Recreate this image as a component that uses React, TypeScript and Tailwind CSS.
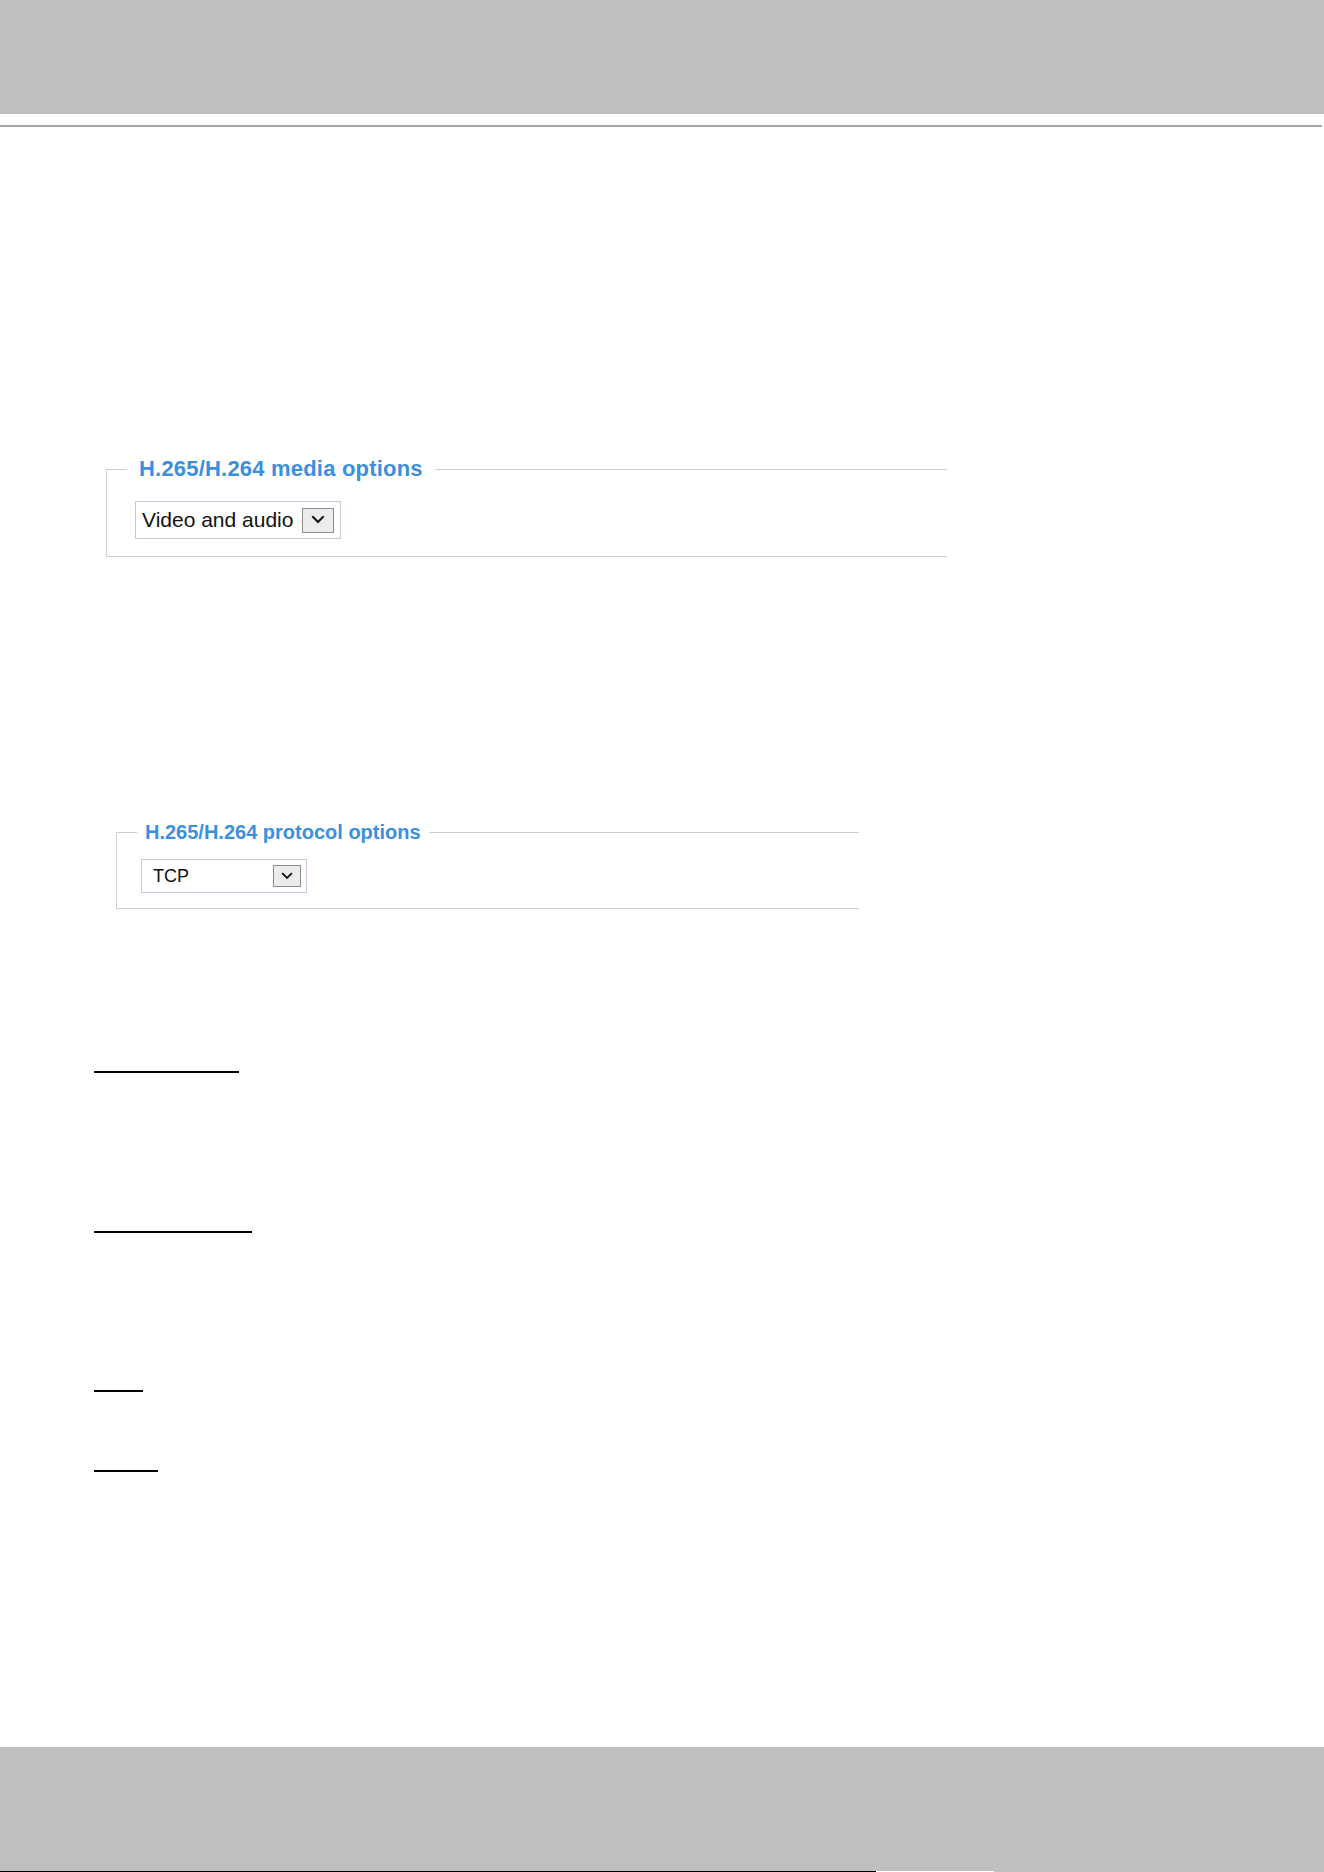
import React from 'react';

interface OptionBoxProps {
  legend: string;
  value: string;
  className?: string;
  legendClass: string;
  selectClass: string;
  textClass: string;
  buttonClass: string;
  chevron: number;
}

// little down-chevron used by the fake dropdown buttons
const Chevron: React.FC<{ size: number }> = ({ size }) => (
  <svg width={size} height={size * 0.7} viewBox="0 0 10 7" fill="none">
    <polyline points="1.5,1.5 5,5 8.5,1.5" stroke="#1a1a1a" strokeWidth="1.6" strokeLinecap="square" />
  </svg>
);

/**
 * Settings group drawn like an old-style fieldset:
 * - blue bold legend cut into the top rule
 * - open on the right side
 * - a single select with a boxed arrow button
 */
const OptionBox: React.FC<OptionBoxProps> = ({
  legend,
  value,
  className = '',
  legendClass,
  selectClass,
  textClass,
  buttonClass,
  chevron
}) => (
  <fieldset
    className={[
      'border-t border-l border-b border-[#d3cfc6] font-["Liberation_Sans",Arial,sans-serif]',
      className
    ].join(' ')}
  >
    <legend className={['font-bold text-[#3b8fdf]', legendClass].join(' ')}>{legend}</legend>
    <div
      className={[
        'flex items-center justify-between border border-[#c3ccdb] bg-white text-[#111]',
        selectClass
      ].join(' ')}
    >
      <span className={textClass}>{value}</span>
      <span
        className={[
          'flex items-center justify-center border border-[#8e8e8e] bg-[#ececec]',
          buttonClass
        ].join(' ')}
      >
        <Chevron size={chevron} />
      </span>
    </div>
  </fieldset>
);

export default function App() {
  return (
    <div className="w-[1324px] h-[1872px] bg-white flex flex-col">
      {/* page header band */}
      <div className="h-[114px] bg-[#bebfc1]" />
      <div className="mt-[11px] h-[2px] w-[1322px] bg-[#a6a6a6]" />

      <OptionBox
        legend="H.265/H.264 media options"
        value="Video and audio"
        className="mt-[330px] ml-[106px] w-[841px] pl-[20px] pb-[17px]"
        legendClass="px-[12px] text-[22px] leading-[24px] tracking-[0.2px]"
        selectClass="mt-[20px] ml-[8px] w-[206px] h-[38px] pl-[6px] pr-[6px]"
        textClass="text-[21px] leading-[24px]"
        buttonClass="w-[32px] h-[25px]"
        chevron={14}
      />

      <OptionBox
        legend="H.265/H.264 protocol options"
        value="TCP"
        className="mt-[263px] ml-[116px] w-[743px] pl-[20px] pb-[15px]"
        legendClass="px-[8px] text-[20px] leading-[24px]"
        selectClass="mt-[15px] ml-[4px] w-[166px] h-[34px] pl-[11px] pr-[5px]"
        textClass="text-[18px] leading-[22px]"
        buttonClass="w-[28px] h-[22px]"
        chevron={12}
      />

      {/* underlined section headings */}
      <div className="ml-[94px] mt-[162px] h-[2px] w-[145px] bg-black" />
      <div className="ml-[94px] mt-[158px] h-[2px] w-[158px] bg-black" />
      <div className="ml-[94px] mt-[157px] h-[2px] w-[49px] bg-black" />
      <div className="ml-[94px] mt-[78px] h-[2px] w-[64px] bg-black" />

      {/* page footer band */}
      <div className="mt-auto h-[124px] bg-[#bebfc1]" />
      <div className="flex h-[1px]">
        <div className="w-[876px] bg-black" />
        <div className="w-[118px] bg-white" />
        <div className="flex-1 bg-[#bebfc1]" />
      </div>
    </div>
  );
}
